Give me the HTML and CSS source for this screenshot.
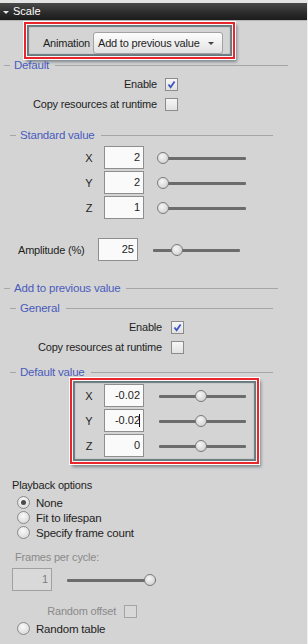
FILE: index.html
```html
<!DOCTYPE html>
<html lang="en">
<head>
    <meta charset="UTF-8">
    <title>Scale</title>
    <link rel="stylesheet" href="styles.css">
</head>
<body>
    <div class="panel">
        <div class="header"><span class="caret"></span>Scale</div>

        <div class="mark mark-anim">
            <span class="field-label">Animation</span>
            <div class="select">Add to previous value<span class="select-arrow"></span></div>
        </div>

        <div class="legend top legend-default">Default</div>
        <div class="check-row">
            <span>Enable</span>
            <span class="checkbox"><svg width="11" height="11" viewBox="0 0 11 11"><path d="M2.5 5.5 L4.6 8.2 L8.6 2.6" fill="none" stroke="#3b54c2" stroke-width="1.8"/></svg></span>
        </div>
        <div class="check-row">
            <span>Copy resources at runtime</span>
            <span class="checkbox"></span>
        </div>

        <div class="legend sub legend-std">Standard value</div>
        <div class="axis-list">
            <div class="axis-row">
                <span class="axis">X</span>
                <div class="num">2</div>
                <div class="slider"><div class="track"></div><div class="thumb" style="left:0px"></div></div>
            </div>
            <div class="axis-row">
                <span class="axis">Y</span>
                <div class="num">2</div>
                <div class="slider"><div class="track"></div><div class="thumb" style="left:0px"></div></div>
            </div>
            <div class="axis-row">
                <span class="axis">Z</span>
                <div class="num">1</div>
                <div class="slider"><div class="track"></div><div class="thumb" style="left:0px"></div></div>
            </div>
        </div>

        <div class="amp-row">
            <span class="amp-label">Amplitude (%)</span>
            <div class="num">25</div>
            <div class="slider"><div class="track"></div><div class="thumb" style="left:20px"></div></div>
        </div>

        <div class="legend top legend-add">Add to previous value</div>
        <div class="legend sub legend-general">General</div>
        <div class="check-row wide">
            <span>Enable</span>
            <span class="checkbox"><svg width="11" height="11" viewBox="0 0 11 11"><path d="M2.5 5.5 L4.6 8.2 L8.6 2.6" fill="none" stroke="#3b54c2" stroke-width="1.8"/></svg></span>
        </div>
        <div class="check-row wide">
            <span>Copy resources at runtime</span>
            <span class="checkbox"></span>
        </div>

        <div class="legend sub legend-defval">Default value</div>
        <div class="mark mark-xyz">
            <div class="axis-row">
                <span class="axis">X</span>
                <div class="num">-0.02</div>
                <div class="slider"><div class="track"></div><div class="thumb" style="left:38px"></div></div>
            </div>
            <div class="axis-row">
                <span class="axis">Y</span>
                <div class="num caret-num">-0.02</div>
                <div class="slider"><div class="track"></div><div class="thumb" style="left:38px"></div></div>
            </div>
            <div class="axis-row">
                <span class="axis">Z</span>
                <div class="num">0</div>
                <div class="slider"><div class="track"></div><div class="thumb" style="left:38px"></div></div>
            </div>
        </div>

        <div class="playback-title">Playback options</div>
        <div class="radio-row"><span class="radio on"></span>None</div>
        <div class="radio-row"><span class="radio"></span>Fit to lifespan</div>
        <div class="radio-row"><span class="radio"></span>Specify frame count</div>

        <div class="frames-label">Frames per cycle:</div>
        <div class="frames-row">
            <div class="num disabled">1</div>
            <div class="slider frames-slider"><div class="track"></div><div class="thumb" style="left:79px"></div></div>
        </div>

        <div class="offset-row">
            <span>Random offset</span>
            <span class="checkbox disabled"></span>
        </div>
        <div class="radio-row table-row"><span class="radio"></span>Random table</div>
    </div>
</body>
</html>
```

FILE: styles.css
```css
body {
    margin: 0;
    background-color: #d4d4d4;
    font-family: 'Liberation Sans', Arial, sans-serif;
    font-size: 11px;
    letter-spacing: -0.2px;
    color: #1e1e1e;
}

.panel {
    width: 307px;
    height: 641px;
    border-top: 3px solid #e4e4e4;
    border-right: 1px solid #efefef;
    overflow: hidden;
}

.header {
    height: 17px;
    line-height: 17px;
    border-bottom: 1px solid #b4b4b4;
    background: linear-gradient(#4a4a4a, #2a2a2a 60%, #1c1c1c);
    color: #fff;
    display: flex;
    align-items: center;
    letter-spacing: 0;
}

.caret {
    width: 0;
    height: 0;
    margin: 1px 4px 0 3px;
    border-left: 3px solid transparent;
    border-right: 3px solid transparent;
    border-top: 3px solid #e8e8e8;
}

/* annotation frames */
.mark {
    box-sizing: border-box;
    border: 2px solid #e8262b;
    outline: 1px solid #fff;
    box-shadow: 2px 3px 3px rgba(40, 60, 70, 0.5),
        inset 0 0 0 1px #f8f8f8,
        inset 0 0 1px 3px #66797f;
}

.mark-anim {
    margin: 1px 0 0 24px;
    width: 211px;
    height: 37px;
    display: flex;
    align-items: center;
    justify-content: flex-end;
    padding: 5px 10px 0 0;
}

.field-label {
    margin-right: 3px;
}

.select {
    position: relative;
    box-sizing: border-box;
    width: 130px;
    height: 22px;
    line-height: 20px;
    padding-left: 4px;
    border: 1px solid #a2a2a2;
    border-radius: 3px;
    background: linear-gradient(#fdfdfd, #f0f0f0 50%, #e2e2e2);
}

.select-arrow {
    position: absolute;
    right: 8px;
    top: 9px;
    border-left: 3px solid transparent;
    border-right: 3px solid transparent;
    border-top: 3px solid #444;
}

/* group headings */
.legend {
    display: flex;
    align-items: center;
    height: 12px;
    color: #4a5bbd;
    font-size: 11.5px;
}

.legend::before {
    content: "";
    width: 6px;
    height: 1px;
    margin-right: 4px;
    background-color: #a6a6a6;
}

.legend::after {
    content: "";
    flex: 1;
    height: 1px;
    margin-left: 6px;
    background-color: #a6a6a6;
}

.legend.top {
    padding-left: 4px;
}

.legend.sub {
    padding-left: 10px;
    margin-right: 34px;
}

.legend-default {
    margin-right: 19px;
}

.legend-std {
    margin-top: 15px;
}

.legend-add {
    margin-top: 20px;
    margin-right: 29px;
}

.legend-general {
    margin-top: 8px;
}

.legend-defval {
    margin-top: 9px;
}

.check-row {
    display: flex;
    justify-content: flex-end;
    align-items: center;
    width: 178px;
    height: 20px;
}

.legend + .check-row {
    margin-top: 3px;
}

.check-row span:first-child {
    margin-right: 8px;
}

.check-row.wide {
    width: 184px;
}

.check-row.wide span:first-child {
    margin-right: 9px;
}

.checkbox {
    box-sizing: border-box;
    width: 13px;
    height: 13px;
    border: 1px solid #8c8c8c;
    background: linear-gradient(#f6f6f6, #e2e2e2);
    display: flex;
    align-items: center;
    justify-content: center;
}

.checkbox.disabled {
    border-color: #a4a4a4;
    background: #d8d8d8;
}

/* numeric rows */
.axis-list {
    margin-top: 4px;
    padding-left: 80px;
}

.axis-row {
    display: flex;
    align-items: center;
    height: 25px;
}

.axis {
    width: 18px;
    margin-right: 6px;
    text-align: center;
    letter-spacing: 0;
}

.num {
    box-sizing: border-box;
    width: 40px;
    height: 23px;
    line-height: 21px;
    padding-right: 3px;
    text-align: right;
    border: 1px solid #8e8e8e;
    background-color: #fafafa;
    letter-spacing: 0;
}

.caret-num::after {
    content: "";
    display: inline-block;
    width: 1px;
    height: 13px;
    margin-left: -1px;
    vertical-align: -3px;
    background-color: #111;
}

.num.disabled {
    color: #7c7c7c;
    background-color: #d9d9d9;
    border-color: #a0a0a0;
}

.slider {
    position: relative;
    width: 89px;
    height: 12px;
    margin-left: 13px;
}

.track {
    position: absolute;
    left: 2px;
    right: 0;
    top: 5px;
    height: 3px;
    border-radius: 1px;
    background-color: #6c6c6c;
}

.thumb {
    position: absolute;
    top: 0;
    box-sizing: border-box;
    width: 12px;
    height: 12px;
    border: 1px solid #7a7a7a;
    border-radius: 50%;
    background: radial-gradient(circle at 40% 35%, #f6f6f6, #d6d6d6 70%, #c4c4c4);
}

.mark-xyz {
    width: 189px;
    height: 86px;
    margin-left: 70px;
    padding: 3px 0 0 8px;
}

.amp-row {
    display: flex;
    align-items: center;
    height: 25px;
    margin-top: 17px;
    padding-left: 18px;
}

.amp-label {
    width: 80px;
}

/* playback */
.playback-title {
    height: 14px;
    line-height: 14px;
    margin-top: 14px;
    padding-left: 12px;
}

.radio-row {
    display: flex;
    align-items: center;
    height: 15px;
    padding-left: 17px;
    font-size: 11.5px;
}

.playback-title + .radio-row {
    margin-top: 3px;
}

.radio {
    box-sizing: border-box;
    width: 13px;
    height: 13px;
    margin-right: 6px;
    border: 1px solid #8a8a8a;
    border-radius: 50%;
    background: radial-gradient(circle at 45% 35%, #fafafa, #dedede 70%, #cfcfcf);
    display: flex;
    align-items: center;
    justify-content: center;
}

.radio.on::after {
    content: "";
    width: 5px;
    height: 5px;
    border-radius: 50%;
    background-color: #4a4a4a;
}

.frames-label {
    height: 14px;
    line-height: 14px;
    margin-top: 10px;
    padding-left: 15px;
    color: #8a8a8a;
}

.frames-row {
    display: flex;
    align-items: center;
    height: 23px;
    margin-top: 4px;
    padding-left: 12px;
}

.frames-slider {
    width: 91px;
}

.offset-row {
    display: flex;
    justify-content: flex-end;
    align-items: center;
    width: 137px;
    height: 14px;
    margin-top: 13px;
    color: #8a8a8a;
}

.offset-row span:first-child {
    margin-right: 8px;
}

.table-row {
    margin-top: 3px;
}
```
